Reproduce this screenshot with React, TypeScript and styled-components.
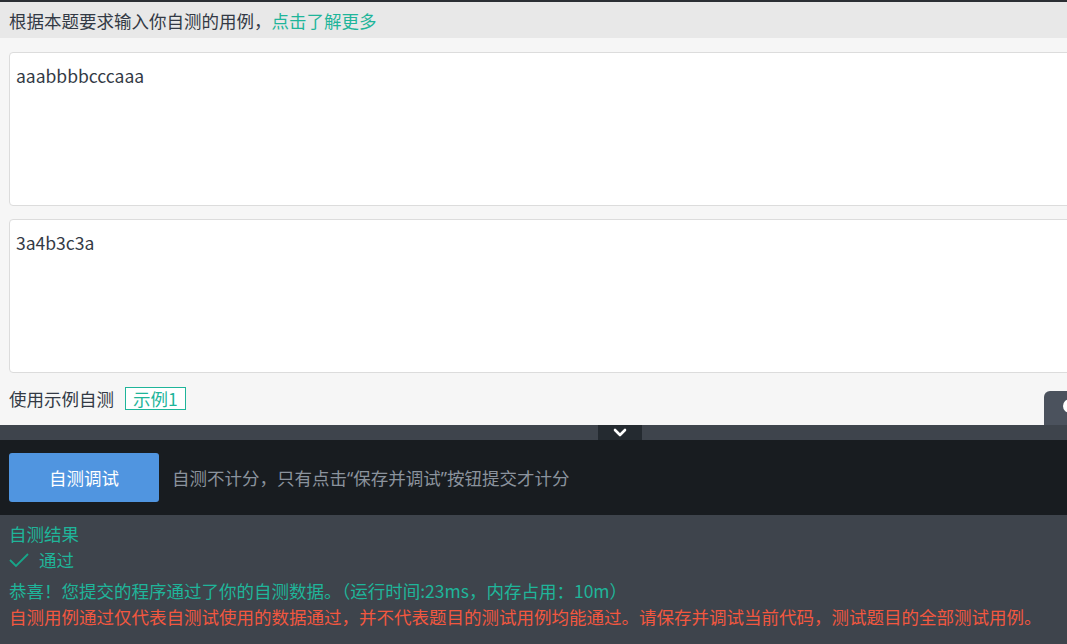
import React from 'react'
import styled, { createGlobalStyle } from 'styled-components'

const GlobalStyle = createGlobalStyle`
  html, body {
    margin: 0;
    padding: 0;
    overflow: hidden;
    background: #3e444c;
  }
  body {
    font-family: "Noto Sans CJK SC", "Noto Sans", sans-serif;
    font-size: 17.5px;
  }
`

const Page = styled.div`
  width: 1067px;
  height: 644px;
  display: flex;
  flex-direction: column;
  overflow: hidden;
  border-top: 2px solid #2b2f34;
  box-sizing: border-box;
`

const Header = styled.div`
  height: 36px;
  display: flex;
  align-items: center;
  padding-left: 9px;
  background: #e8e8e8;
  color: #333a45;
`

const Link = styled.a`
  color: #1fb59a;
  text-decoration: none;
  cursor: pointer;
`

const Editor = styled.div`
  position: relative;
  display: flex;
  flex-direction: column;
  gap: 13px;
  padding: 14px 0 0 9px;
  height: 387px;
  box-sizing: border-box;
  background: #f6f6f6;
`

const CaseInput = styled.textarea`
  display: block;
  width: 1080px;
  height: 154px;
  box-sizing: border-box;
  margin: 0;
  padding: 10px 6px;
  border: 1px solid #dcdcdc;
  border-radius: 4px;
  background: #fff;
  color: #333a45;
  font-family: inherit;
  font-size: 17.5px;
  line-height: 26px;
  resize: none;
  outline: none;
`

const SampleRow = styled.div`
  display: flex;
  align-items: center;
  gap: 11px;
  color: #333a45;
`

const SampleTag = styled.span`
  display: inline-flex;
  align-items: center;
  height: 23px;
  padding: 0 7px;
  box-sizing: border-box;
  border: 1px solid #1fb59a;
  color: #1fb59a;
  background: #fff;
  cursor: pointer;
`

const SideTab = styled.div`
  position: absolute;
  right: 0;
  bottom: 0;
  width: 23px;
  height: 34px;
  border-top-left-radius: 6px;
  background: #4b525d;
  overflow: hidden;
`

const TabDot = styled.span`
  position: absolute;
  left: 19px;
  top: 8px;
  width: 14px;
  height: 14px;
  border-radius: 50%;
  background: #fff;
`

const Divider = styled.div`
  height: 15px;
  display: flex;
  padding-left: 598px;
  background: #3e444c;
`

const Handle = styled.div`
  width: 44px;
  display: flex;
  align-items: center;
  justify-content: center;
  background: #242a30;
  cursor: pointer;
`

const Toolbar = styled.div`
  height: 75px;
  display: flex;
  align-items: center;
  gap: 13px;
  padding-left: 9px;
  background: #181c20;
`

const RunButton = styled.button`
  width: 150px;
  height: 49px;
  border: none;
  border-radius: 3px;
  background: #5095e0;
  color: #fff;
  font-family: inherit;
  font-size: 17.5px;
  cursor: pointer;
`

const Hint = styled.span`
  color: #8b939d;
  font-family: "Noto Sans", "Noto Sans CJK SC", sans-serif;
`

const Result = styled.div`
  flex: 1;
  padding: 6px 0 0 9px;
  background: #3e444c;
  line-height: 26px;
`

const Line = styled.div<{ $color: string; $gap?: number }>`
  display: flex;
  align-items: center;
  color: ${p => p.$color};
  margin-top: ${p => p.$gap || 0}px;
  white-space: nowrap;
`

const Check = styled.svg`
  width: 20px;
  height: 16px;
  margin-right: 10px;
`

export default function App() {
  return (
    <>
      <GlobalStyle />
      <Page>
        <Header>
          根据本题要求输入你自测的用例，<Link>点击了解更多</Link>
        </Header>
        <Editor>
          <CaseInput readOnly value="aaabbbbcccaaa" />
          <CaseInput readOnly value="3a4b3c3a" />
          <SampleRow>
            使用示例自测
            <SampleTag>示例1</SampleTag>
          </SampleRow>
          <SideTab>
            <TabDot />
          </SideTab>
        </Editor>
        <Divider>
          <Handle>
            <svg width="14" height="9" viewBox="0 0 14 9">
              <path d="M2 2 L7 7 L12 2" fill="none" stroke="#fff" strokeWidth="2.6" strokeLinecap="round" strokeLinejoin="round" />
            </svg>
          </Handle>
        </Divider>
        <Toolbar>
          <RunButton>自测调试</RunButton>
          <Hint>自测不计分，只有点击“保存并调试”按钮提交才计分</Hint>
        </Toolbar>
        <Result>
          <Line $color="#1fb59a">自测结果</Line>
          <Line $color="#1fb59a">
            <Check viewBox="0 0 20 16">
              <path d="M1 8 L7 14 L19 2" fill="none" stroke="#17a589" strokeWidth="1.8" />
            </Check>
            通过
          </Line>
          <Line $color="#1fb59a" $gap={5}>
            恭喜！您提交的程序通过了你的自测数据。（运行时间:23ms，内存占用：10m）
          </Line>
          <Line $color="#f2573f">
            自测用例通过仅代表自测试使用的数据通过，并不代表题目的测试用例均能通过。请保存并调试当前代码，测试题目的全部测试用例。
          </Line>
        </Result>
      </Page>
    </>
  )
}
